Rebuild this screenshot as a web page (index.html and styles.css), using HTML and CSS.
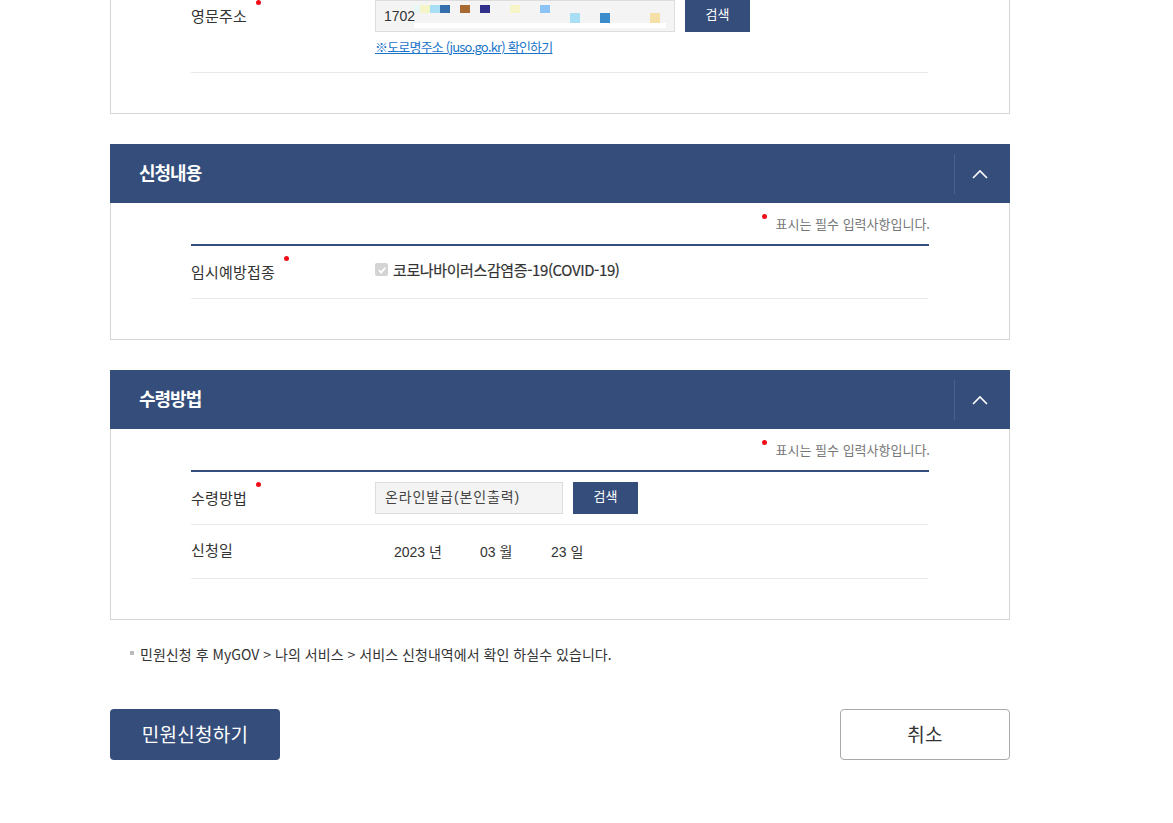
FILE: index.html
```html
<!DOCTYPE html>
<html lang="ko">
<head>
<meta charset="utf-8">
<title>민원신청</title>
<link rel="stylesheet" href="styles.css">
</head>
<body>
<main class="page">
  <section class="panel panel-first">
    <div class="rows">
      <div class="row row-addr">
        <div class="label label-addr">영문주소<i class="dot"></i></div>
        <div class="value">
          <div class="inline">
            <div class="addr-input">1702
              <span class="mask"></span>
              <span class="px p1"></span><span class="px p2"></span><span class="px p3"></span><span class="px p4"></span><span class="px p5"></span><span class="px p6"></span><span class="px p7"></span><span class="px p8"></span><span class="px p9"></span><span class="px p10"></span><span class="px p11"></span>
            </div>
            <button class="btn-search">검색</button>
          </div>
          <a class="link" href="#">※도로명주소 (juso.go.kr) 확인하기</a>
        </div>
      </div>
    </div>
  </section>

  <section class="section">
    <header class="head"><h2>신청내용</h2><div class="toggle"><svg width="16" height="10" viewBox="0 0 16 10"><path d="M1 9 L8 2 L15 9" fill="none" stroke="#fff" stroke-width="1.6"/></svg></div></header>
    <div class="panel">
      <p class="req"><i class="dot dot-req"></i>표시는 필수 입력사항입니다.</p>
      <div class="rows ruled">
        <div class="row row-vac">
          <div class="label label-vac">임시예방접종<i class="dot"></i></div>
          <div class="value check-line">
            <span class="check"><svg width="12" height="12" viewBox="0 0 12 12"><path d="M3 6.2 L5.2 8.6 L9.2 3.6" fill="none" stroke="#fff" stroke-width="1.8"/></svg></span>
            <span class="check-text">코로나바이러스감염증-19(COVID-19)</span>
          </div>
        </div>
      </div>
    </div>
  </section>

  <section class="section">
    <header class="head"><h2>수령방법</h2><div class="toggle"><svg width="16" height="10" viewBox="0 0 16 10"><path d="M1 9 L8 2 L15 9" fill="none" stroke="#fff" stroke-width="1.6"/></svg></div></header>
    <div class="panel">
      <p class="req"><i class="dot dot-req"></i>표시는 필수 입력사항입니다.</p>
      <div class="rows ruled">
        <div class="row row-method">
          <div class="label">수령방법<i class="dot"></i></div>
          <div class="value inline">
            <div class="method-input">온라인발급(본인출력)</div>
            <button class="btn-search">검색</button>
          </div>
        </div>
        <div class="row row-date">
          <div class="label">신청일</div>
          <div class="value dates">
            <span class="date d-y">2023 년</span>
            <span class="date d-m">03 월</span>
            <span class="date d-d">23 일</span>
          </div>
        </div>
      </div>
    </div>
  </section>

  <p class="notice">민원신청 후 MyGOV &gt; 나의 서비스 &gt; 서비스 신청내역에서 확인 하실수 있습니다.</p>

  <div class="actions">
    <button class="btn btn-primary">민원신청하기</button>
    <button class="btn btn-cancel">취소</button>
  </div>
</main>
</body>
</html>
```
FILE: styles.css
```css
* { box-sizing: border-box; }
html, body { margin: 0; padding: 0; background: #fff; }
body {
  height: 823px;
  overflow: hidden;
  font-family: "Noto Sans CJK KR", "Noto Sans", sans-serif;
  color: #333;
}
.page { width: 900px; margin-left: 110px; }
.panel {
  border: 1px solid #d5d5d5;
  border-top: 0;
  padding: 0 80px 40px;
}
.panel-first { height: 114px; padding-bottom: 0; }
.section { margin-top: 30px; }
.head {
  height: 59px;
  background: #344d7a;
  color: #fff;
  display: flex;
  align-items: center;
  justify-content: space-between;
  padding-left: 29px;
}
.head h2 { margin: 0 0 4px; font-size: 18px; font-weight: 700; letter-spacing: -1px; }
.toggle {
  width: 56px;
  height: 40px;
  border-left: 1px solid #4b628b;
  display: flex;
  align-items: center;
  justify-content: center;
  padding-right: 5px;
}
.req {
  margin: 0 -1px 0 0;
  height: 41px;
  padding-top: 11px;
  text-align: right;
  font-size: 13px;
  line-height: 20px;
  color: #777;
  position: relative;
}
.dot {
  position: absolute;
  width: 5px;
  height: 5px;
  border-radius: 50%;
  background: #f00d17;
}
.dot-req { right: 163px; top: 11px; }
.rows { width: 738px; }
.ruled { border-top: 2px solid #344d7a; }
.row {
  display: flex;
  border-bottom: 1px solid #eaeaea;
  width: 737px;
}
.label {
  width: 184px;
  flex: none;
  position: relative;
  font-size: 15px;
  letter-spacing: 0.2px;
  color: #333;
}
.label .dot { left: 65px; top: 10px; }
.label-vac .dot { left: 93px; }
.label-addr .dot { top: 0; }
.row-addr { height: 73px; }
.label-addr { line-height: 32px; }
.row-vac { height: 53px; }
.label-vac { padding-top: 15px; line-height: 22px; }
.row-method { height: 53px; }
.row-method .label { padding-top: 15px; line-height: 22px; }
.row-date { height: 54px; }
.row-date .label { padding-top: 14px; line-height: 22px; }
.inline { display: flex; gap: 10px; }
.row-method .inline { padding-top: 10px; }
.addr-input {
  position: relative;
  width: 300px;
  height: 32px;
  background: #f4f4f4;
  border: 1px solid #ddd;
  padding-left: 8px;
  font: 14px/30px "Liberation Sans", sans-serif;
  color: #333;
}
.method-input {
  width: 188px;
  height: 32px;
  background: #f4f4f4;
  border: 1px solid #ddd;
  padding-left: 9px;
  font-family: "Liberation Sans", "Noto Sans CJK KR", sans-serif;
  font-size: 14px;
  letter-spacing: 0.9px;
  line-height: 29px;
  color: #444;
}
.btn-search {
  height: 32px;
  width: 65px;
  border: 0;
  padding: 0 0 4px;
  background: #344d7a;
  color: #fff;
  font: 13px/26px "Noto Sans CJK KR", sans-serif;
}
.link {
  display: block;
  margin-top: 5px;
  font-size: 13px;
  line-height: 19px;
  color: #1a75c9;
  letter-spacing: -0.8px;
}
.mask { position: absolute; left: 38px; top: 22px; width: 252px; height: 5px; background: #fff; }
.px { position: absolute; width: 10px; height: 8px; top: 4px; }
.p1 { left: 38px; background: #e8f6f8; width: 6px; }
.p2 { left: 44px; background: #f5f5c8; }
.p3 { left: 54px; background: #a9dff5; }
.p4 { left: 64px; background: #346eab; }
.p5 { left: 84px; background: #a86a30; }
.p6 { left: 104px; background: #33308c; }
.p7 { left: 134px; background: #f5f5c8; }
.p8 { left: 164px; background: #8cc5f5; }
.p9 { left: 194px; top: 12px; height: 10px; background: #a9dff5; }
.p10 { left: 224px; top: 12px; height: 10px; background: #3a8ccc; }
.p11 { left: 274px; top: 12px; height: 10px; background: #f5e0a8; }
.check-line { display: flex; align-items: flex-start; padding-top: 14px; }
.check {
  width: 13px;
  height: 13px;
  margin-top: 3px;
  margin-right: 5px;
  background: #d4d4d4;
  border-radius: 2px;
  display: flex;
  align-items: center;
  justify-content: center;
}
.check-text { font-size: 15px; line-height: 20px; letter-spacing: -0.38px; color: #333; -webkit-text-stroke: 0.2px #333; }
.dates {
  position: relative;
  flex: 1;
  font-family: "Liberation Sans", "Noto Sans CJK KR", sans-serif;
  font-size: 14px;
  line-height: 22px;
  color: #333;
}
.date { position: absolute; top: 16px; }
.d-y { left: 19px; }
.d-m { left: 105px; }
.d-d { left: 176px; }
.notice {
  margin: 24px 0 0;
  padding-left: 30px;
  position: relative;
  font-size: 14px;
  line-height: 20px;
  letter-spacing: 0.04px;
  color: #333;
}
.notice::before {
  content: "";
  position: absolute;
  left: 20px;
  top: 7px;
  width: 4px;
  height: 4px;
  background: #bbb;
}
.actions { display: flex; justify-content: space-between; margin-top: 45px; }
.btn {
  width: 170px;
  height: 51px;
  padding: 0 0 3px;
  border-radius: 4px;
  font: 19px/1 "Noto Sans CJK KR", sans-serif;
  letter-spacing: 0.3px;
}
.btn-primary { background: #344d7a; color: #fff; border: 0; }
.btn-cancel { background: #fff; color: #333; border: 1px solid #aaa; }
```
